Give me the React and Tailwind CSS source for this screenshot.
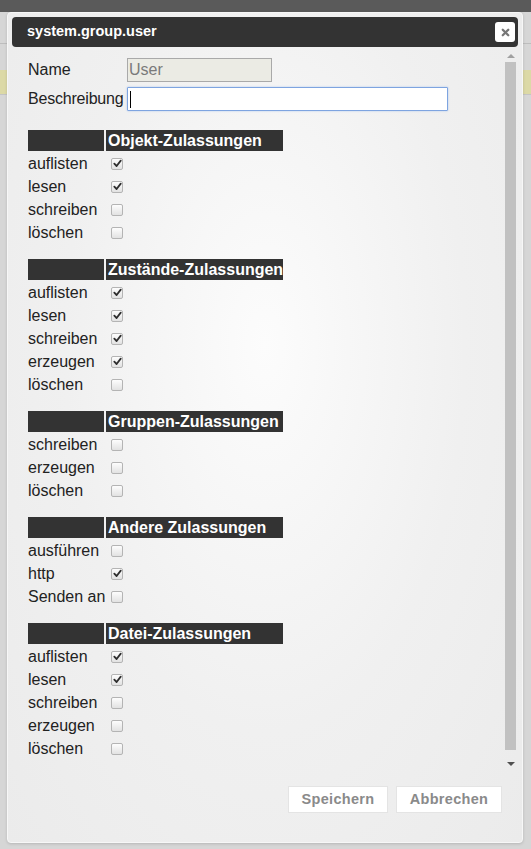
import { X } from "lucide-react";

const sections = [
  {
    title: "Objekt-Zulassungen",
    rows: [
      ["auflisten", true],
      ["lesen", true],
      ["schreiben", false],
      ["löschen", false],
    ],
  },
  {
    title: "Zustände-Zulassungen",
    rows: [
      ["auflisten", true],
      ["lesen", true],
      ["schreiben", true],
      ["erzeugen", true],
      ["löschen", false],
    ],
  },
  {
    title: "Gruppen-Zulassungen",
    rows: [
      ["schreiben", false],
      ["erzeugen", false],
      ["löschen", false],
    ],
  },
  {
    title: "Andere Zulassungen",
    rows: [
      ["ausführen", false],
      ["http", true],
      ["Senden an", false],
    ],
  },
  {
    title: "Datei-Zulassungen",
    rows: [
      ["auflisten", true],
      ["lesen", true],
      ["schreiben", false],
      ["erzeugen", false],
      ["löschen", false],
    ],
  },
];

function Checkbox({ checked }) {
  return (
    <span className="ml-[5px] flex h-[12px] w-[12px] items-center justify-center rounded-[2px] border border-[#b4b4b4] bg-gradient-to-b from-[#fdfdfd] to-[#e2e2e2]">
      {checked && (
        <svg viewBox="0 0 10 10" className="h-[9px] w-[9px]">
          <path d="M1.5 5.2 L4 7.8 L8.6 1.8" fill="none" stroke="#2e2e2e" strokeWidth="2" strokeLinecap="round" strokeLinejoin="round" />
        </svg>
      )}
    </span>
  );
}

function Section({ title, rows }) {
  return (
    <div className="mt-[16px] grid w-[255px] grid-cols-[76px_177px] gap-[2px] first:mt-0">
      <div className="h-[21px] bg-[#333333]" />
      <div className="h-[21px] whitespace-nowrap bg-[#333333] pl-[2px] text-[16px] font-bold leading-[21px] text-white">{title}</div>
      {rows.map(([label, checked], i) => (
        <div key={i} className="contents">
          <div className="h-[21px] whitespace-nowrap text-[16px] leading-[21px] text-[#222]">{label}</div>
          <div className="flex h-[21px] items-center">
            <Checkbox checked={checked} />
          </div>
        </div>
      ))}
    </div>
  );
}

export default function App() {
  return (
    <div className="relative h-[849px] w-[531px] overflow-hidden bg-[#d6d6d6] font-['Liberation_Sans',Arial,sans-serif]">
      {/* page behind the overlay */}
      <div className="h-[12px] bg-[#5a5a5a]" />
      <div className="h-[31px]" />
      <div className="h-px bg-[#bdbdbd]" />
      <div className="h-[26px]" />
      <div className="h-[24px] bg-[#dcd9a6]" />
      <div className="h-px bg-[#c4c4c4]" />

      {/* dialog */}
      <div className="absolute left-[7px] top-[12px] flex h-[831px] w-[516px] flex-col rounded-[4px] border border-[#f7f7f7] bg-[radial-gradient(ellipse_at_50%_40%,#fcfcfc_0%,#f0f0f0_55%,#ebebeb_100%)] p-[4px] shadow-[0_1px_3px_rgba(0,0,0,0.15)]">
        <div className="flex h-[30px] shrink-0 items-center justify-between rounded-[4px] bg-[#333333] pl-[15px] pr-[3px]">
          <span className="text-[14.5px] font-bold text-white">system.group.user</span>
          <button className="flex h-[20px] w-[20px] items-center justify-center rounded-[3px] bg-white">
            <X size={11} strokeWidth={5} color="#777" />
          </button>
        </div>

        <div className="flex min-h-0 flex-1">
          <div className="flex-1 overflow-hidden pl-[16px] pt-[11px]">
            <div className="flex h-[24px] items-center">
              <span className="w-[99px] shrink-0 text-[16px] text-[#222]">Name</span>
              <input
                disabled
                value="User"
                readOnly
                className="h-[24px] w-[145px] shrink-0 border border-[#a9a9a9] bg-[#ebebe4] px-[1px] text-[16px] text-[#7a7a7a] outline-none"
              />
            </div>
            <div className="mt-[5px] flex h-[24px] items-center">
              <span className="w-[99px] shrink-0 overflow-visible whitespace-nowrap text-[16px] tracking-[-0.2px] text-[#222]">Beschreibung</span>
              <div className="flex h-[24px] w-[321px] shrink-0 items-center rounded-[1px] border border-[#7ea4e0] bg-white pl-[2px] shadow-[0_0_2px_#a8c4ef]">
                <span className="h-[17px] w-px bg-black" />
              </div>
            </div>

            <div className="mt-[19px]">
              {sections.map((s) => (
                <Section key={s.title} title={s.title} rows={s.rows} />
              ))}
            </div>
          </div>

          {/* scrollbar */}
          <div className="mr-[2px] mt-[4px] flex h-[722px] w-[11px] flex-col items-center">
            <div className="mt-[3px] h-0 w-0 border-x-[4px] border-b-[4px] border-x-transparent border-b-[#a0a0a0]" />
            <div className="mt-[4px] h-[688px] w-[11px] bg-[#c1c1c1]" />
            <div className="mt-[12px] h-0 w-0 border-x-[4px] border-t-[4px] border-x-transparent border-t-[#505050]" />
          </div>
        </div>

        <div className="flex h-[66px] shrink-0 items-start justify-end gap-[8px] pr-[16px] pt-[14px]">
          <button className="h-[27px] w-[100px] border border-[#e4e4e4] bg-white text-[14.5px] font-bold tracking-[0.3px] text-[#8a8a8a]">
            Speichern
          </button>
          <button className="h-[27px] w-[106px] border border-[#e4e4e4] bg-white text-[14.5px] font-bold tracking-[0.3px] text-[#8a8a8a]">
            Abbrechen
          </button>
        </div>
      </div>
    </div>
  );
}
